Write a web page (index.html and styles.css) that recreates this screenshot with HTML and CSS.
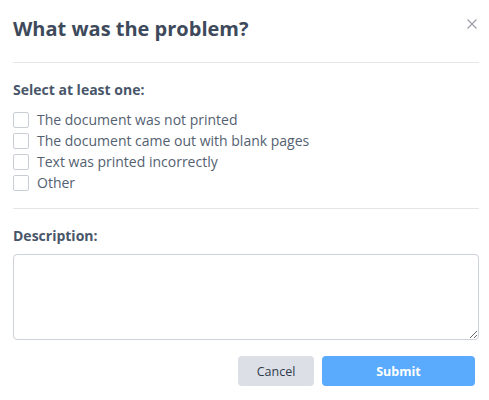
FILE: index.html
```html
<!DOCTYPE html>
<html>
<head>
<meta charset="utf-8">
<link rel="stylesheet" href="styles.css">
</head>
<body>
<div class="modal">
  <div class="header">
    <h1 class="title">What was the problem?</h1>
    <button class="close" aria-label="Close">
      <svg width="10" height="10" viewBox="0 0 10 10"><path d="M0.5 0.5L9.5 9.5M9.5 0.5L0.5 9.5" stroke="#9a9fa6" stroke-width="1.2" fill="none"/></svg>
    </button>
  </div>
  <hr class="divider">
  <div class="section">
    <div class="label">Select at least one:</div>
    <ul class="options">
      <li class="option"><span class="box"></span>The document was not printed</li>
      <li class="option"><span class="box"></span>The document came out with blank pages</li>
      <li class="option"><span class="box"></span>Text was printed incorrectly</li>
      <li class="option"><span class="box"></span>Other</li>
    </ul>
  </div>
  <hr class="divider divider2">
  <div class="section desc">
    <div class="label">Description:</div>
    <textarea class="textarea"></textarea>
  </div>
  <div class="actions">
    <button class="btn cancel">Cancel</button>
    <button class="btn submit">Submit</button>
  </div>
</div>
</body>
</html>
```

FILE: styles.css
```css
html, body {
  margin: 0;
  padding: 0;
  background: #ffffff;
}
body {
  font-family: "Open Sans", "Liberation Sans", sans-serif;
}
.modal {
  width: 466px;
  padding: 15px 10px 0 13px;
}
.header {
  display: flex;
  justify-content: space-between;
  align-items: flex-start;
}
.title {
  margin: 0;
  font-size: 20px;
  line-height: 28px;
  font-weight: 700;
  color: #3e4a5b;
}
.close {
  border: 0;
  background: none;
  padding: 0;
  margin: 4px 2px 0 0;
  width: 10px;
  height: 10px;
  display: flex;
}
.divider {
  border: 0;
  border-top: 1px solid #e4e6ea;
  margin: 19px 0 0 0;
  height: 0;
}
.section {
  padding-top: 16px;
}
.label {
  font-size: 14px;
  line-height: 21px;
  font-weight: 700;
  color: #49566a;
}
.options {
  list-style: none;
  margin: 9px 0 0 0;
  padding: 0;
}
.option {
  display: flex;
  align-items: center;
  gap: 8px;
  font-size: 14px;
  line-height: 21px;
  color: #546171;
}
.box {
  width: 14px;
  height: 14px;
  border: 1px solid #c9ced6;
  border-radius: 2px;
  background: #fff;
  flex: none;
}
.divider2 {
  margin-top: 15px;
}
.textarea {
  display: block;
  box-sizing: border-box;
  width: 466px;
  height: 86px;
  margin-top: 8px;
  border: 1px solid #cdd1d8;
  border-radius: 4px;
  font-family: inherit;
  font-size: 14px;
  resize: vertical;
}
.actions {
  display: flex;
  justify-content: flex-end;
  gap: 8px;
  margin-top: 16px;
  padding-right: 4px;
}
.btn {
  height: 30px;
  border: 0;
  border-radius: 4px;
  font-family: inherit;
  font-size: 12.5px;
  cursor: pointer;
}
.cancel {
  width: 76px;
  background: #dcdfe6;
  color: #2f3b4c;
}
.submit {
  width: 153px;
  background: #5aabfe;
  color: #ffffff;
  font-weight: 700;
}
```
